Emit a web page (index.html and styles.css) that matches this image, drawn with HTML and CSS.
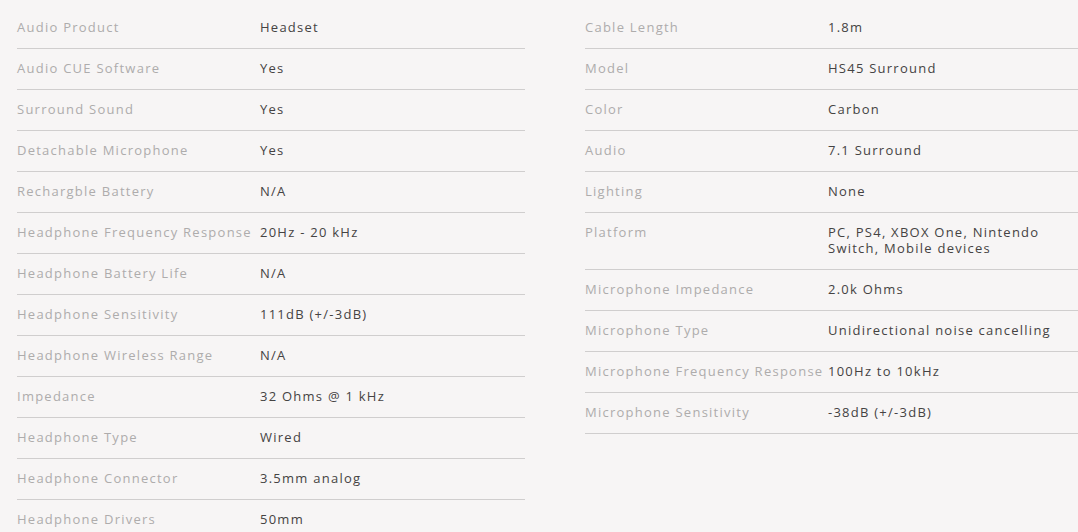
FILE: index.html
```html
<!DOCTYPE html>
<html>
<head>
<meta charset="utf-8">
<link rel="stylesheet" href="styles.css">
</head>
<body>
<div class="specs">
  <div class="col col-left">
    <div class="row"><div class="label">Audio Product</div><div class="value">Headset</div></div>
    <div class="row"><div class="label">Audio CUE Software</div><div class="value">Yes</div></div>
    <div class="row"><div class="label">Surround Sound</div><div class="value">Yes</div></div>
    <div class="row"><div class="label">Detachable Microphone</div><div class="value">Yes</div></div>
    <div class="row"><div class="label">Rechargble Battery</div><div class="value">N/A</div></div>
    <div class="row"><div class="label">Headphone Frequency Response</div><div class="value">20Hz - 20 kHz</div></div>
    <div class="row"><div class="label">Headphone Battery Life</div><div class="value">N/A</div></div>
    <div class="row"><div class="label">Headphone Sensitivity</div><div class="value">111dB (+/-3dB)</div></div>
    <div class="row"><div class="label">Headphone Wireless Range</div><div class="value">N/A</div></div>
    <div class="row"><div class="label">Impedance</div><div class="value">32 Ohms @ 1 kHz</div></div>
    <div class="row"><div class="label">Headphone Type</div><div class="value">Wired</div></div>
    <div class="row"><div class="label">Headphone Connector</div><div class="value">3.5mm analog</div></div>
    <div class="row"><div class="label">Headphone Drivers</div><div class="value">50mm</div></div>
  </div>
  <div class="col col-right">
    <div class="row"><div class="label">Cable Length</div><div class="value">1.8m</div></div>
    <div class="row"><div class="label">Model</div><div class="value">HS45 Surround</div></div>
    <div class="row"><div class="label">Color</div><div class="value">Carbon</div></div>
    <div class="row"><div class="label">Audio</div><div class="value">7.1 Surround</div></div>
    <div class="row"><div class="label">Lighting</div><div class="value">None</div></div>
    <div class="row"><div class="label">Platform</div><div class="value">PC, PS4, XBOX One, Nintendo Switch, Mobile devices</div></div>
    <div class="row"><div class="label">Microphone Impedance</div><div class="value">2.0k Ohms</div></div>
    <div class="row"><div class="label">Microphone Type</div><div class="value">Unidirectional noise cancelling</div></div>
    <div class="row"><div class="label">Microphone Frequency Response</div><div class="value">100Hz to 10kHz</div></div>
    <div class="row"><div class="label">Microphone Sensitivity</div><div class="value">-38dB (+/-3dB)</div></div>
  </div>
</div>
</body>
</html>
```

FILE: styles.css
```css
html, body {
  margin: 0;
  padding: 0;
  background: #f7f5f5;
  overflow: hidden;
}
body {
  font-family: "Open Sans", "Noto Sans", sans-serif;
  font-size: 13px;
  letter-spacing: 1.25px;
}
.specs {
  display: flex;
  align-items: flex-start;
  gap: 60px;
  padding: 8px 0 0 17px;
  width: 1078px;
  box-sizing: border-box;
}
.col-left {
  flex: 0 0 508px;
}
.col-right {
  flex: 1 1 auto;
  min-width: 0;
}
.row {
  display: flex;
  padding: 11px 0 13px;
  line-height: 16px;
  border-bottom: 1px solid #d0cece;
}
.label {
  width: 243px;
  flex: none;
  white-space: nowrap;
  color: #aeacac;
}
.value {
  flex: 1;
  min-width: 0;
  color: #454343;
}
```
